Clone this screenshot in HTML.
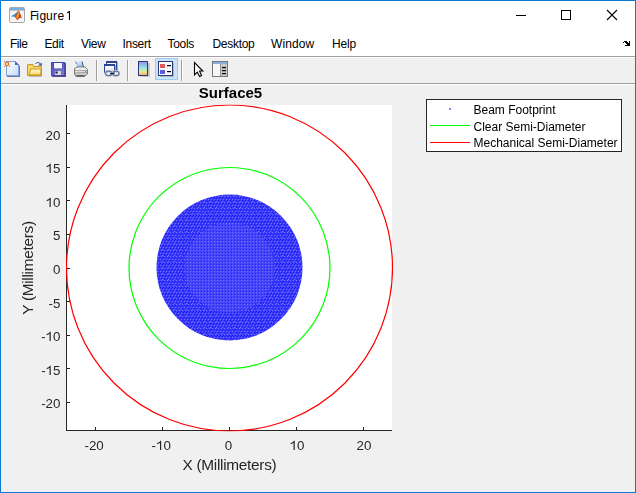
<!DOCTYPE html>
<html><head><meta charset="utf-8">
<style>
html,body{margin:0;padding:0;width:636px;height:493px;overflow:hidden;background:#f0f0f0;}
svg{position:absolute;left:0;top:0;display:block;}
text{font-family:"Liberation Sans",sans-serif;}
</style></head>
<body>
<svg width="636" height="493" viewBox="0 0 636 493" shape-rendering="auto">
<defs>
  <clipPath id="ax"><rect x="66" y="104.5" width="327" height="327"/></clipPath>
  <linearGradient id="cb" x1="0" y1="0" x2="0" y2="1">
    <stop offset="0" stop-color="#9a8cf0"/>
    <stop offset="0.45" stop-color="#8ee8e8"/>
    <stop offset="0.75" stop-color="#f0e88a"/>
    <stop offset="1" stop-color="#f5a070"/>
  </linearGradient>
  <pattern id="dots" x="0" y="0" width="3" height="3" patternUnits="userSpaceOnUse">
    <rect x="0" y="0" width="3" height="3" fill="#4646f7"/>
    <rect x="0" y="0" width="1" height="1" fill="#2222ff"/>
    <rect x="1" y="1" width="1" height="1" fill="#6e6eff"/>
  </pattern>
  <pattern id="dots2" x="0" y="0" width="6" height="6" patternUnits="userSpaceOnUse"><rect x="0" y="0" width="6" height="6" fill="#3a3af8"/><rect x="0" y="0" width="1" height="1" fill="#1c1cff"/><rect x="3" y="0" width="1" height="1" fill="#1c1cff"/><rect x="2" y="2" width="1" height="1" fill="#1c1cff"/><rect x="5" y="2" width="1" height="1" fill="#1c1cff"/><rect x="1" y="5" width="1" height="1" fill="#1c1cff"/><rect x="4" y="5" width="1" height="1" fill="#1c1cff"/><rect x="3" y="3" width="1" height="1" fill="#1c1cff"/><rect x="1" y="1" width="1" height="1" fill="#7070ff"/><rect x="4" y="1" width="1" height="1" fill="#7070ff"/><rect x="2" y="4" width="1" height="1" fill="#7070ff"/><rect x="5" y="4" width="1" height="1" fill="#7070ff"/><rect x="0" y="3" width="1" height="1" fill="#7070ff"/></pattern>
</defs>
<!-- window background -->
<rect x="0" y="0" width="636" height="493" fill="#f0f0f0"/>
<!-- title + menu bar white -->
<rect x="0" y="0" width="636" height="56" fill="#ffffff"/>
<!-- menu bottom line -->
<rect x="0" y="56" width="636" height="1" fill="#a0a0a0"/>
<rect x="0" y="57" width="636" height="1" fill="#ffffff"/>
<!-- toolbar bottom line -->
<rect x="0" y="83" width="636" height="1" fill="#a0a0a0"/>
<rect x="0" y="84" width="636" height="1" fill="#ffffff"/>

<!-- title bar -->
<g>
  <rect x="9.5" y="7.5" width="15" height="15" rx="1" fill="#f4f4f4" stroke="#a4a8ac" stroke-width="1"/>
  <rect x="10" y="8" width="14" height="2" fill="#7aaee0"/>
  <rect x="10" y="10" width="14" height="0.8" fill="#b8bcc0"/>
  <path d="M11,16.3 L14.5,14.2 L17.8,11.2 L16.8,17 L14,16.8 Z" fill="#3a8ad0"/>
  <path d="M17.8,11.2 L18.8,10.6 L20.2,13.5 L22,18.6 L20.2,17.4 L17.2,20.2 L15.2,17.2 Z" fill="#c83818"/>
  <path d="M18.3,11.3 L19.3,12.8 L18.8,16.5 L17.2,19.4 L16.2,16.8 Z" fill="#f0a020"/>
</g>
<text x="29.9 36.3 39.5 46.1 53.0 57.6" y="20" font-size="12" fill="#000">Figure</text>
<path d="M68.9,11 L70,11 L70,20 L68.9,20 L68.9,12.6 L67,13.4 L67,12.6 Z" fill="#000"/>
<rect x="516" y="15" width="10" height="1" fill="#000"/>
<rect x="561.5" y="10.5" width="9" height="9" fill="none" stroke="#000" stroke-width="1"/>
<path d="M607,10 L617,20 M617,10 L607,20" stroke="#000" stroke-width="1.1"/>

<!-- menu -->
<g font-size="12" fill="#000">
  <text x="10" y="48" letter-spacing="-0.5">File</text>
  <text x="44.5" y="48" letter-spacing="-0.4">Edit</text>
  <text x="81" y="48" letter-spacing="-0.3">View</text>
  <text x="122.5" y="48" letter-spacing="-0.3">Insert</text>
  <text x="167.5" y="48" letter-spacing="-0.3">Tools</text>
  <text x="212.5" y="48" letter-spacing="-0.3">Desktop</text>
  <text x="271" y="48" letter-spacing="0.1">Window</text>
  <text x="332" y="48" letter-spacing="-0.2">Help</text>
</g>
<g fill="#000" shape-rendering="crispEdges"><rect x="624" y="41" width="1" height="1"/><rect x="625" y="41" width="1" height="1"/><rect x="626" y="41" width="1" height="1"/><rect x="629" y="41" width="1" height="1"/><rect x="623" y="42" width="1" height="1"/><rect x="625" y="42" width="1" height="1"/><rect x="626" y="42" width="1" height="1"/><rect x="627" y="42" width="1" height="1"/><rect x="629" y="42" width="1" height="1"/><rect x="626" y="43" width="1" height="1"/><rect x="627" y="43" width="1" height="1"/><rect x="628" y="43" width="1" height="1"/><rect x="629" y="43" width="1" height="1"/><rect x="627" y="44" width="1" height="1"/><rect x="628" y="44" width="1" height="1"/><rect x="629" y="44" width="1" height="1"/><rect x="625" y="45" width="1" height="1"/><rect x="626" y="45" width="1" height="1"/><rect x="627" y="45" width="1" height="1"/><rect x="628" y="45" width="1" height="1"/><rect x="629" y="45" width="1" height="1"/></g>

<!-- toolbar icons -->
<!-- new -->
<g>
  <linearGradient id="pg" x1="0" y1="0" x2="1" y2="1"><stop offset="0" stop-color="#ffffff"/><stop offset="1" stop-color="#c8dcf8"/></linearGradient>
  <path d="M7,62 L16,62 L20,66 L20,77 L7,77 Z" fill="#6a74a8"/>
  <path d="M6,61 L15,61 L19,65 L19,76 L6,76 Z" fill="#80a4e0"/>
  <path d="M7,62 L15,62 L18,65 L18,75 L7,75 Z" fill="url(#pg)"/>
  <path d="M15,61 L19,65 L15,65 Z" fill="#5a64a8"/>
  <circle cx="7" cy="64" r="2.4" fill="#e87040"/>
  <circle cx="7" cy="64" r="1.2" fill="#e8e860"/>
  <rect x="4" y="61" width="1" height="1" fill="#e87040"/>
  <rect x="9" y="61" width="1" height="1" fill="#e87040"/>
  <rect x="4" y="66" width="1" height="1" fill="#e87040"/>
  <rect x="9" y="66" width="1" height="1" fill="#e87040"/>
</g>
<!-- open -->
<g>
  <linearGradient id="fg" x1="0" y1="0" x2="0" y2="1"><stop offset="0" stop-color="#fffbd8"/><stop offset="1" stop-color="#f8d868"/></linearGradient>
  <rect x="29" y="76" width="13" height="1" fill="#b8c0d0"/>
  <path d="M27,65.5 Q27,64 28.5,64 L33,64 L34,66 L41,66 Q42,66 42,67.5 L42,75 Q42,76 41,76 L28,76 Q27,76 27,75 Z" fill="#c8961e"/>
  <path d="M28,66 L28,75 L41,75 L41,67 L33.5,67 L32.5,65 L29,65 Z" fill="#f8d868"/>
  <path d="M28.5,75 L30.5,68.5 L41.5,68.5 L41,75 Z" fill="#c8961e"/>
  <path d="M29.5,74.5 L31.2,69.5 L40.5,69.5 L40.2,74.5 Z" fill="url(#fg)"/>
  <path d="M35.5,64 Q37.5,61.2 40,63.5" fill="none" stroke="#5070a0" stroke-width="1.1"/>
  <path d="M38,65.2 L41.8,62.5 L41.8,66 Z" fill="#40609a"/>
</g>
<!-- save -->
<g>
  <linearGradient id="sg" x1="0" y1="0" x2="1" y2="1"><stop offset="0" stop-color="#5050c0"/><stop offset="1" stop-color="#7a7ad8"/></linearGradient>
  <rect x="52" y="63" width="14" height="14" fill="#50508a"/>
  <rect x="51" y="62" width="14" height="14" fill="#4848a8"/>
  <rect x="52" y="63" width="12" height="12" fill="url(#sg)"/>
  <rect x="53.5" y="62.5" width="9" height="6.5" fill="#3a3aa0"/>
  <rect x="54" y="63" width="8" height="5.5" fill="#f4f4fc"/>
  <rect x="55" y="71" width="6" height="4" fill="#d8d8d8"/>
  <rect x="55.5" y="71.5" width="2" height="2" fill="#101010"/>
</g>
<!-- print -->
<g>
  <linearGradient id="ppg" x1="0" y1="0" x2="0" y2="1"><stop offset="0" stop-color="#d8e8fc"/><stop offset="1" stop-color="#98b8f0"/></linearGradient>
  <linearGradient id="pbg" x1="0" y1="0" x2="0" y2="1"><stop offset="0" stop-color="#f8f8f8"/><stop offset="0.6" stop-color="#dadada"/><stop offset="1" stop-color="#b8b8b8"/></linearGradient>
  <path d="M75.5,61.5 L82,61.5 L83.5,67 L77,67 Z" fill="url(#ppg)"/>
  <path d="M82,61.5 L83.5,67" stroke="#404868" stroke-width="1"/>
  <path d="M75.5,61.5 L76.5,64" stroke="#6070a0" stroke-width="0.8"/>
  <path d="M74.5,68.5 L77,67 L85,67 L87.5,69.5 L87.5,74 L84.5,76.5 L76,76.5 L74.5,74 Z" fill="url(#pbg)" stroke="#7a7a7a" stroke-width="1"/>
  <path d="M75,70.5 L87,70.5" stroke="#a8a8a8" stroke-width="1"/>
  <path d="M75,73 L87,72.5" stroke="#9a9a9a" stroke-width="1"/>
  <path d="M76.5,75.8 L84.5,75.8" stroke="#505050" stroke-width="1.2"/>
  <rect x="85" y="71" width="1" height="1" fill="#40b040"/>
</g>
<rect x="96" y="60" width="1" height="21" fill="#a0a0a0"/><rect x="97" y="60" width="1" height="21" fill="#ffffff"/>
<!-- link -->
<g>
  <linearGradient id="wg" x1="0" y1="0" x2="0" y2="1"><stop offset="0" stop-color="#ffffff"/><stop offset="1" stop-color="#d0d8e8"/></linearGradient>
  <rect x="106" y="61" width="11" height="9" fill="#2a4490"/>
  <rect x="107" y="63" width="9" height="6" fill="#f4f6fa"/>
  <rect x="117" y="62" width="1" height="8" fill="#a8b0c0"/>
  <rect x="104" y="64" width="11" height="9" fill="#2a4490"/>
  <rect x="105" y="66" width="9" height="7" fill="url(#wg)"/>
  <rect x="115" y="65" width="1" height="5" fill="#a8b0c0"/>
  <ellipse cx="108.8" cy="73.4" rx="3.3" ry="2.3" fill="none" stroke="#b8c4d8" stroke-width="2.2"/>
  <ellipse cx="115.8" cy="73.4" rx="3.3" ry="2.3" fill="none" stroke="#b8c4d8" stroke-width="2.2"/>
  <ellipse cx="108.8" cy="73.4" rx="3.3" ry="2.3" fill="none" stroke="#4a5a80" stroke-width="0.9"/>
  <ellipse cx="115.8" cy="73.4" rx="3.3" ry="2.3" fill="none" stroke="#4a5a80" stroke-width="0.9"/>
  <rect x="110" y="73" width="4.5" height="1.2" fill="#202840"/>
</g>
<rect x="127" y="60" width="1" height="21" fill="#a0a0a0"/><rect x="128" y="60" width="1" height="21" fill="#ffffff"/>
<!-- colorbar -->
<g>
  <rect x="140" y="63" width="10" height="14" fill="#c8c8c8"/>
  <rect x="138.5" y="61.5" width="9" height="14" fill="url(#cb)" stroke="#2a3a78" stroke-width="1"/>
</g>
<!-- legend (pressed) -->
<g>
  <rect x="155.5" y="58.5" width="22" height="21" fill="#cce4f7" stroke="#99ccf0" stroke-width="1"/>
  <rect x="160" y="63" width="14" height="14" fill="#b0b8c8"/>
  <rect x="158.5" y="61.5" width="14" height="14" fill="#fafafa" stroke="#2a3a78" stroke-width="1"/>
  <rect x="160" y="64" width="5" height="4" fill="#e25c5c"/>
  <rect x="160" y="70" width="5" height="4" fill="#5c5ce2"/>
  <rect x="167" y="65" width="4" height="1.2" fill="#000"/>
  <rect x="167" y="71" width="4" height="1.2" fill="#000"/>
</g>
<rect x="181" y="60" width="1" height="21" fill="#a0a0a0"/><rect x="182" y="60" width="1" height="21" fill="#ffffff"/>
<!-- arrow -->
<path d="M194.5,62.5 L194.5,75 L197.3,72.2 L199.6,76.6 L201.6,75.6 L199.5,71 L202.8,71 Z" fill="#fff" stroke="#000" stroke-width="1.1" stroke-linejoin="miter"/>
<!-- property editor -->
<g>
  <rect x="212.5" y="61.5" width="15" height="15" fill="#c8c8c8" stroke="#707880" stroke-width="1"/>
  <rect x="213" y="62" width="14" height="2" fill="#8ab0d8"/>
  <rect x="213" y="64" width="7" height="12" fill="#f6f6f6"/>
  <rect x="220" y="64" width="1" height="12" fill="#909090"/>
  <rect x="222" y="67" width="4" height="1.2" fill="#000"/>
  <rect x="222" y="70" width="4" height="1.2" fill="#000"/>
  <rect x="222" y="73" width="4" height="1.2" fill="#000"/>
</g>

<!-- axes -->
<rect x="67" y="105" width="325" height="325" fill="#ffffff"/>
<rect x="66" y="105" width="1" height="326" fill="#262626"/>
<rect x="66" y="430" width="326" height="1" fill="#262626"/>
<g clip-path="url(#ax)">
  <circle cx="229.5" cy="268" r="163" fill="none" stroke="#ff0000" stroke-width="1.2"/>
  <circle cx="229.5" cy="268" r="100.5" fill="none" stroke="#00ff00" stroke-width="1.2"/>
  <circle cx="229.5" cy="267.5" r="73" fill="url(#dots2)"/>
  <circle cx="229.5" cy="267.5" r="45" fill="url(#dots)"/>
</g>
<g fill="#262626">
  <!-- y ticks -->
  <rect x="67" y="133" width="3" height="1"/>
  <rect x="67" y="167" width="3" height="1"/>
  <rect x="67" y="200" width="3" height="1"/>
  <rect x="67" y="234" width="3" height="1"/>
  <rect x="67" y="268" width="3" height="1"/>
  <rect x="67" y="301" width="3" height="1"/>
  <rect x="67" y="335" width="3" height="1"/>
  <rect x="67" y="368" width="3" height="1"/>
  <rect x="67" y="402" width="3" height="1"/>
  <!-- x ticks -->
  <rect x="95" y="427" width="1" height="3"/>
  <rect x="162" y="427" width="1" height="3"/>
  <rect x="229" y="427" width="1" height="3"/>
  <rect x="296" y="427" width="1" height="3"/>
  <rect x="363" y="427" width="1" height="3"/>
</g>
<g opacity="0.999">
<g font-size="13.33" fill="#262626">
<text x="45.59" y="140">2</text>
<text x="53.01" y="140">0</text>
<text x="53.01" y="173">5</text>
<text x="53.01" y="207">0</text>
<text x="53.01" y="240">5</text>
<text x="53.01" y="274">0</text>
<text x="48.57" y="308">-</text>
<text x="53.01" y="308">5</text>
<text x="41.15" y="341">-</text>
<text x="53.01" y="341">0</text>
<text x="41.15" y="375">-</text>
<text x="53.01" y="375">5</text>
<text x="41.15" y="408">-</text>
<text x="45.59" y="408">2</text>
<text x="53.01" y="408">0</text>
<text x="84.50" y="450">-</text>
<text x="88.94" y="450">2</text>
<text x="96.35" y="450">0</text>
<text x="151.60" y="450">-</text>
<text x="163.45" y="450">0</text>
<text x="224.78" y="450">0</text>
<text x="297.01" y="450">0</text>
<text x="356.60" y="450">2</text>
<text x="364.01" y="450">0</text>
<path d="M50.74,163.80 L50.74,173.00 L49.54,173.00 L49.54,166.10 L46.69,167.30 L46.69,166.10 L49.09,164.90 L49.84,163.80 Z M50.74,197.80 L50.74,207.00 L49.54,207.00 L49.54,200.10 L46.69,201.30 L46.69,200.10 L49.09,198.90 L49.84,197.80 Z M50.74,331.80 L50.74,341.00 L49.54,341.00 L49.54,334.10 L46.69,335.30 L46.69,334.10 L49.09,332.90 L49.84,331.80 Z M50.74,365.80 L50.74,375.00 L49.54,375.00 L49.54,368.10 L46.69,369.30 L46.69,368.10 L49.09,366.90 L49.84,365.80 Z M161.19,440.80 L161.19,450.00 L159.99,450.00 L159.99,443.10 L157.14,444.30 L157.14,443.10 L159.54,441.90 L160.29,440.80 Z M294.75,440.80 L294.75,450.00 L293.55,450.00 L293.55,443.10 L290.70,444.30 L290.70,443.10 L293.10,441.90 L293.85,440.80 Z"/>
</g>
<text x="229.5" y="470" font-size="15.4" letter-spacing="-0.3" fill="#262626" text-anchor="middle">X (Millimeters)</text>
<text transform="translate(32.6,268) rotate(-90)" font-size="15.4" letter-spacing="-0.3" fill="#262626" text-anchor="middle">Y (Millimeters)</text>
<text x="230.5" y="98" font-size="15" font-weight="bold" fill="#000" text-anchor="middle">Surface5</text>

<!-- legend -->
<rect x="426.5" y="99.5" width="195" height="52" fill="#ffffff" stroke="#262626" stroke-width="1"/>
<rect x="449" y="108" width="2" height="2" fill="#8282ff"/>
<rect x="430" y="125" width="40" height="1" fill="#00ff00"/>
<rect x="430" y="142" width="40" height="1" fill="#ff0000"/>
<g font-size="12" fill="#000">
  <text x="473.5" y="114">Beam Footprint</text>
  <text x="473.5" y="130.5">Clear Semi-Diameter</text>
  <text x="473.5" y="147">Mechanical Semi-Diameter</text>
</g>

</g>
<!-- window border -->
<rect x="0.5" y="0.5" width="635" height="492" fill="none" stroke="#0a7ad5" stroke-width="1"/>
</svg>
</body></html>
